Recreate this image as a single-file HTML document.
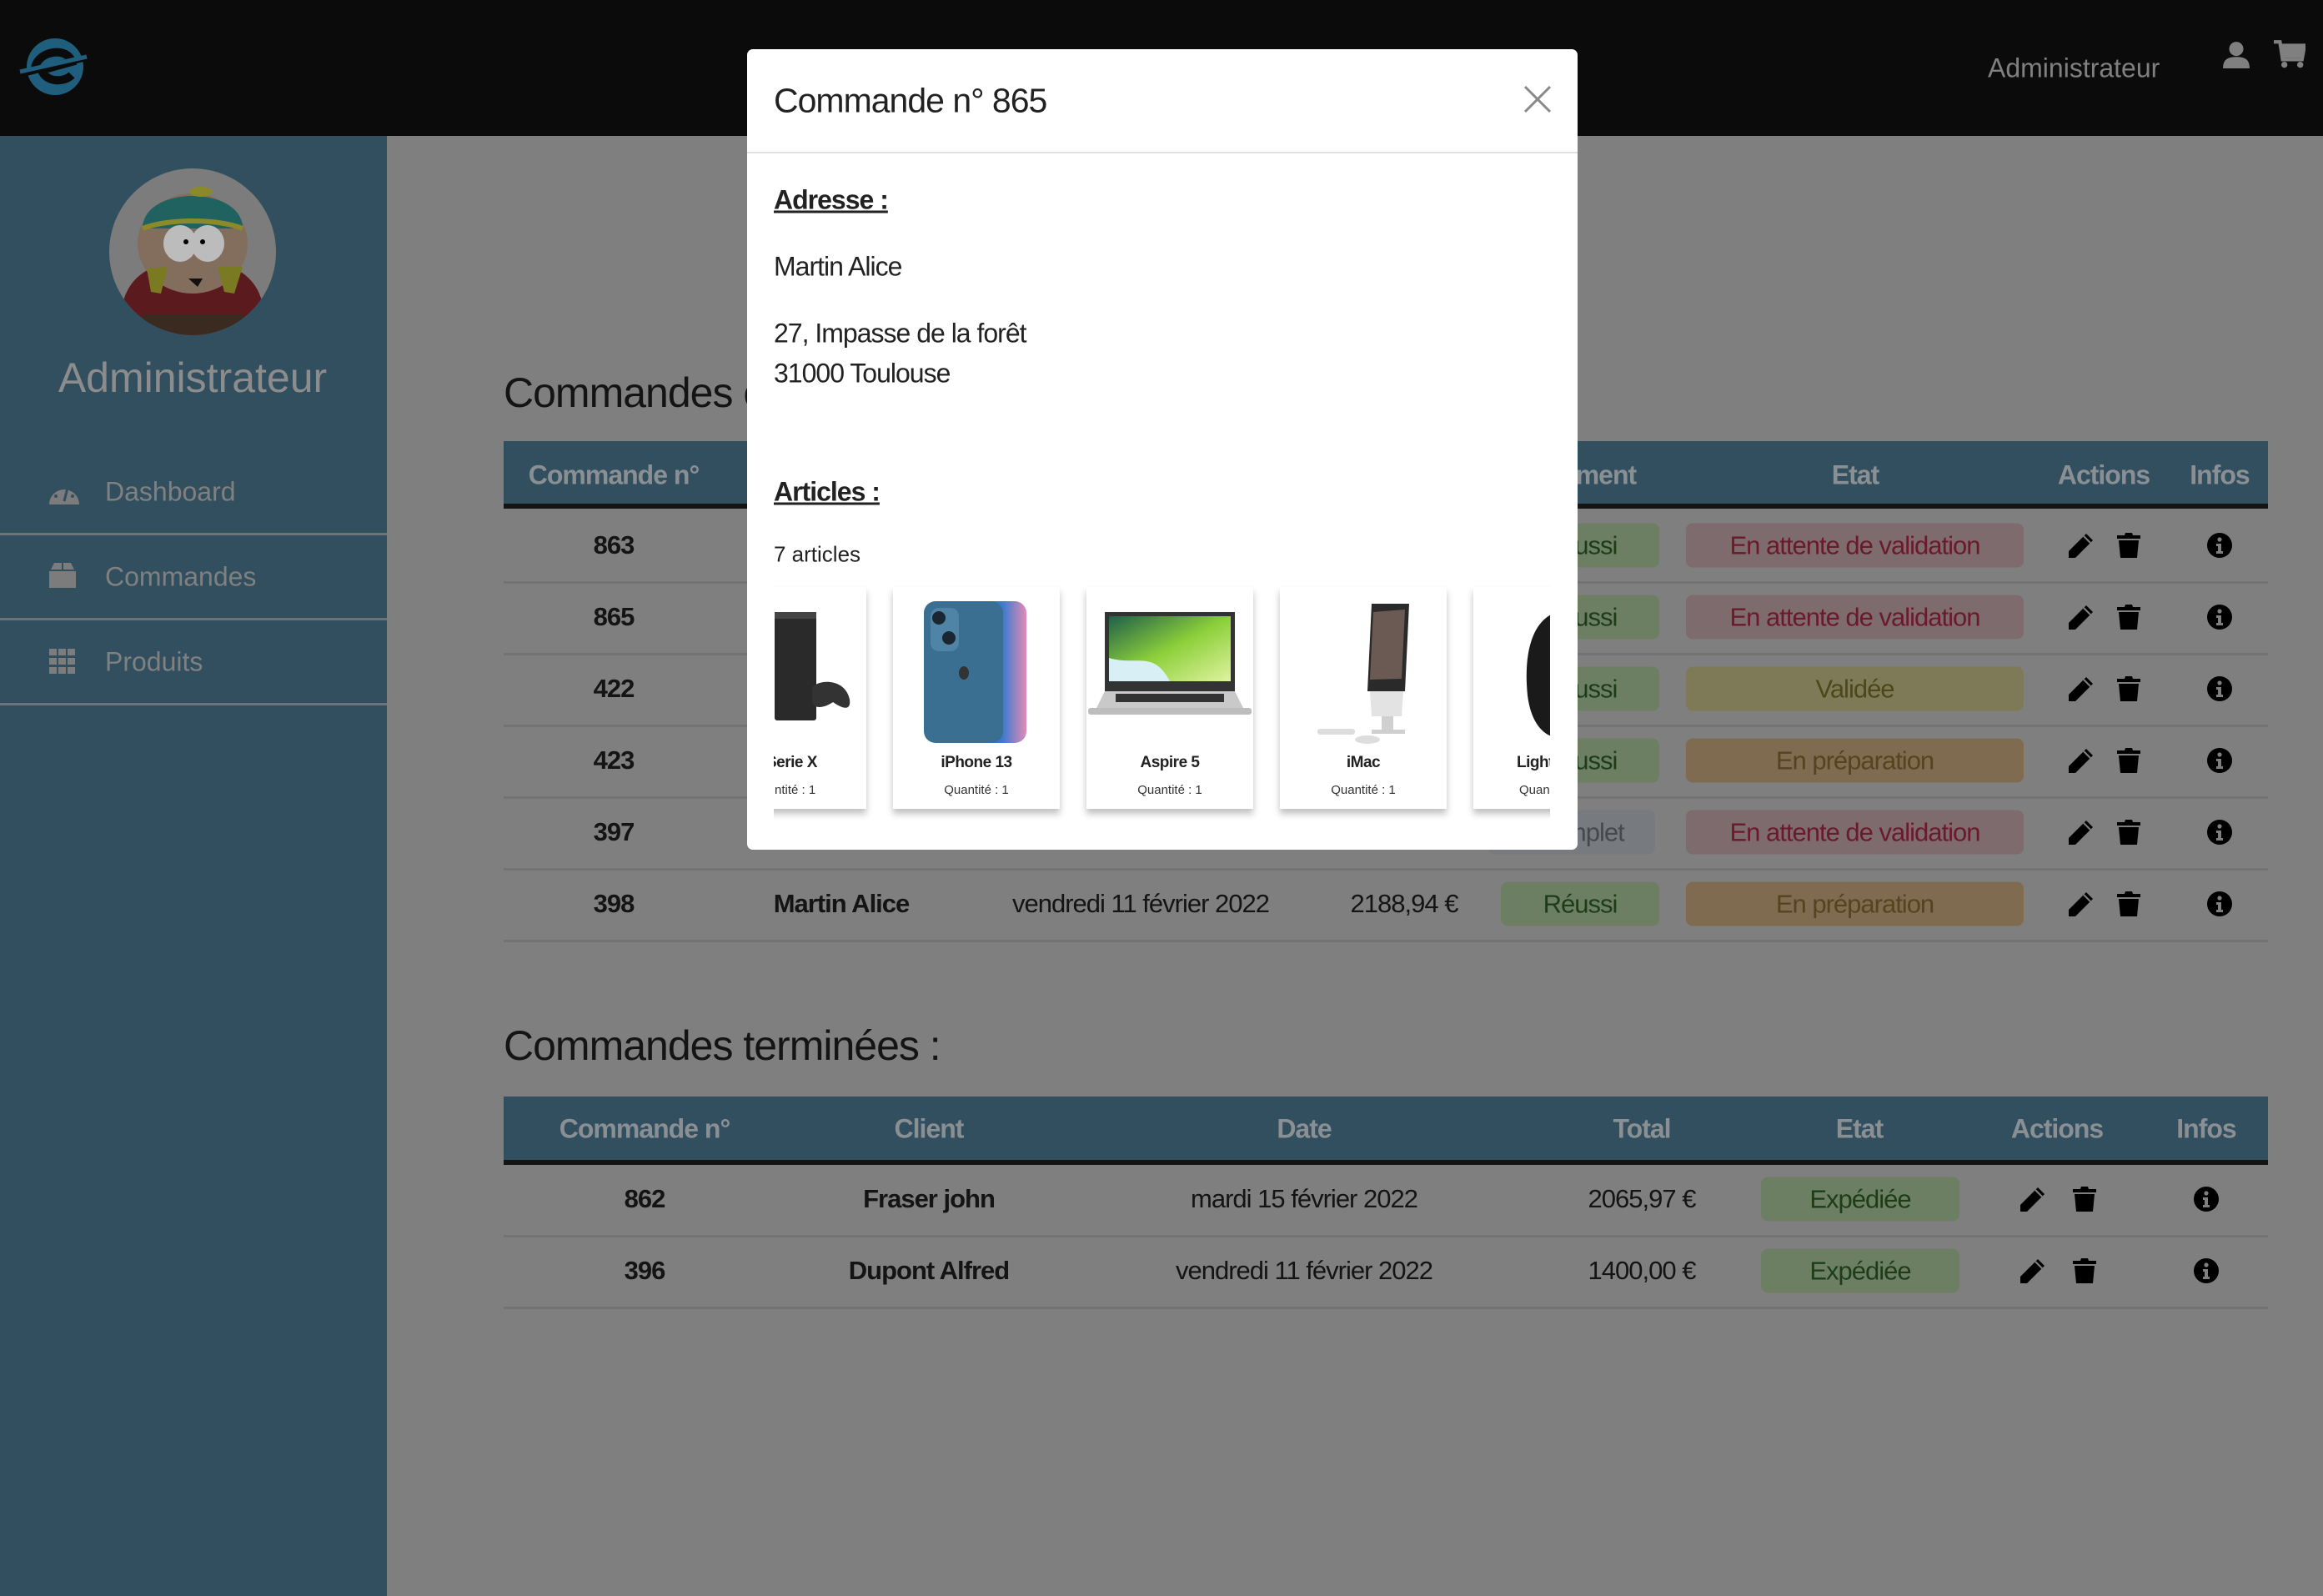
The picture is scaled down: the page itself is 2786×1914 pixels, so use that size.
<!DOCTYPE html>
<html><head><meta charset="utf-8">
<style>
*{margin:0;padding:0;box-sizing:border-box}
html,body{width:2786px;height:1914px;overflow:hidden}
body{background:#7f7f7f;font-family:"Liberation Sans",sans-serif;position:relative;color:#141414}
.a{position:absolute}
.c{position:absolute;white-space:nowrap;transform:translate(-50%,-50%);letter-spacing:-1px}
.l{position:absolute;white-space:nowrap;transform:translateY(-50%);letter-spacing:-1px}
.hd{font-weight:bold;font-size:32px;color:#8a8f93}
.cell{font-size:31px}
.b{font-weight:bold}
.badge{position:absolute;height:53px;border-radius:8px;transform:translateY(-50%);font-size:31px;display:flex;align-items:center;justify-content:center;letter-spacing:-1px;white-space:nowrap}
.g{background:#6d7f63;color:#1c3d17}
.r{background:#7d6b6e;color:#6a1a2a}
.y{background:#7e7a57;color:#4d4719}
.o{background:#7f6b50;color:#574320}
.gr{background:#777a7e;color:#45494e}
.line{position:absolute;height:3px;background:#737373}
.card{position:absolute;top:5px;width:200px;height:266px;background:#fff;box-shadow:0 6px 8px rgba(0,0,0,.25)}
.cn{position:absolute;left:0;right:0;top:200px;text-align:center;font-weight:bold;font-size:19px;letter-spacing:-.5px;color:#222}
.cq{position:absolute;left:0;right:0;top:235px;text-align:center;font-size:15px;color:#333}
</style></head><body>

<div class="a" style="left:0;top:0;width:2786px;height:163px;background:#0b0b0b"></div>
<svg class="a" style="left:20px;top:40px" width="90" height="80" viewBox="0 0 90 80">
<circle cx="46" cy="40" r="34" fill="#1f5f7d"/>
<path d="M22 46 C20 22 60 14 66 34 L30 44 C34 58 56 60 66 50" fill="none" stroke="#0b0b0b" stroke-width="10"/>
<path d="M6 50 L86 30" stroke="#0b0b0b" stroke-width="5"/>
<path d="M4 46 L84 28" stroke="#1f5f7d" stroke-width="5"/>
</svg>
<div class="l" style="left:2384px;top:82px;font-size:32px;color:#808080;letter-spacing:0">Administrateur</div>
<svg class="a" style="left:2665px;top:48px" width="34" height="34" viewBox="0 0 32 32"><circle cx="16" cy="10" r="8" fill="#808080"/><path d="M1 32 C1 22 6 19 16 19 C26 19 31 22 31 32Z" fill="#808080"/></svg>
<svg class="a" style="left:2727px;top:48px" width="38" height="34" viewBox="0 0 36 32"><path d="M0 2 H7 L10 22 H32 L35 6 H9" fill="none" stroke="#808080" stroke-width="4"/><path d="M9 6 H35 L32 20 H11Z" fill="#808080"/><circle cx="12" cy="28" r="3.5" fill="#808080"/><circle cx="30" cy="28" r="3.5" fill="#808080"/></svg>

<div class="a" style="left:0;top:163px;width:464px;height:1751px;background:#324f5f"></div>
<svg class="a" style="left:131px;top:202px" width="200" height="200" viewBox="0 0 200 200">
<defs><clipPath id="cp"><circle cx="100" cy="100" r="100"/></clipPath></defs>
<circle cx="100" cy="100" r="100" fill="#7c7c7c"/>
<g clip-path="url(#cp)">
<path d="M15 190 C10 140 40 110 100 110 C160 110 190 140 185 190Z" fill="#5a1a1e"/>
<rect x="40" y="175" width="120" height="25" fill="#3a2a20"/>
<ellipse cx="100" cy="90" rx="66" ry="60" fill="#836e5e"/>
<path d="M40 72 C40 20 160 20 160 72Z" fill="#1f6260"/>
<path d="M40 72 C70 60 130 60 160 72" stroke="#8a8a2a" stroke-width="6" fill="none"/>
<ellipse cx="110" cy="28" rx="14" ry="6" fill="#8a8a2a"/>
<ellipse cx="85" cy="90" rx="20" ry="22" fill="#bcbcbc"/><ellipse cx="118" cy="90" rx="20" ry="22" fill="#bcbcbc"/>
<circle cx="92" cy="88" r="3" fill="#000"/><circle cx="112" cy="88" r="3" fill="#000"/>
<path d="M95 132 H112 L106 142Z" fill="#111"/>
<path d="M45 120 L70 118 L62 150 L50 148Z" fill="#7a7a22"/><path d="M130 118 L160 118 L150 150 L138 148Z" fill="#7a7a22"/>
</g></svg>
<div class="c" style="left:231px;top:453px;font-size:50px;color:#8c8c8c;letter-spacing:0">Administrateur</div>
<svg class="a" style="left:59px;top:575px" width="36" height="30" viewBox="0 0 36 30"><path d="M0 30 A18 18 0 1 1 36 30Z" fill="#7c7c7c"/><path d="M18 26 L22 10" stroke="#324f5f" stroke-width="3"/><circle cx="8" cy="20" r="2" fill="#324f5f"/><circle cx="11" cy="11" r="2" fill="#324f5f"/><circle cx="28" cy="20" r="2" fill="#324f5f"/></svg>
<div class="l" style="left:126px;top:590px;font-size:32px;color:#808080;letter-spacing:0">Dashboard</div>
<div class="a" style="left:0;top:639px;width:464px;height:3px;background:#6c7478"></div>
<svg class="a" style="left:59px;top:673px" width="32" height="32" viewBox="0 0 32 32"><path d="M2 10 L6 2 H26 L30 10Z" fill="#7c7c7c"/><rect x="0" y="12" width="32" height="20" fill="#7c7c7c"/><rect x="15" y="2" width="2" height="10" fill="#324f5f"/></svg>
<div class="l" style="left:126px;top:692px;font-size:32px;color:#808080;letter-spacing:0">Commandes</div>
<div class="a" style="left:0;top:741px;width:464px;height:3px;background:#6c7478"></div>
<svg class="a" style="left:59px;top:778px" width="32" height="30" viewBox="0 0 32 30"><g fill="#7c7c7c"><rect x="0" y="0" width="9" height="8"/><rect x="11" y="0" width="9" height="8"/><rect x="22" y="0" width="9" height="8"/><rect x="0" y="11" width="9" height="8"/><rect x="11" y="11" width="9" height="8"/><rect x="22" y="11" width="9" height="8"/><rect x="0" y="22" width="9" height="8"/><rect x="11" y="22" width="9" height="8"/><rect x="22" y="22" width="9" height="8"/></g></svg>
<div class="l" style="left:126px;top:794px;font-size:32px;color:#808080;letter-spacing:0">Produits</div>
<div class="a" style="left:0;top:843px;width:464px;height:3px;background:#6c7478"></div>

<div class="l" style="left:604px;top:471px;font-size:50px;color:#141414;letter-spacing:-1px">Commandes en cours :</div>
<div class="a" style="left:604px;top:529px;width:2116px;height:81px;background:#324f5f;border-bottom:6px solid #141414"></div>
<div class="c hd" style="left:736px;top:570px">Commande n°</div>
<div class="c hd" style="left:1009px;top:570px">Client</div>
<div class="c hd" style="left:1368px;top:570px">Date</div>
<div class="c hd" style="left:1684px;top:570px">Total</div>
<div class="c hd" style="left:1895px;top:570px">Paiement</div>
<div class="c hd" style="left:2225px;top:570px">Etat</div>
<div class="c hd" style="left:2523px;top:570px">Actions</div>
<div class="c hd" style="left:2662px;top:570px">Infos</div>

<svg width="0" height="0" style="position:absolute"><defs>
<symbol id="pen" viewBox="0 0 32 32"><path d="M22 2 L30 10 L9 31 L1 31 L1 23Z" fill="#000"/><path d="M19 5 L27 13" stroke="#7f7f7f" stroke-width="2"/></symbol>
<symbol id="trash" viewBox="0 0 28 32"><path d="M0 4 H9 L10 1 H18 L19 4 H28 V8 H0Z" fill="#000"/><path d="M2 10 H26 L24 31 H4Z" fill="#000"/></symbol>
<symbol id="info" viewBox="0 0 32 32"><circle cx="16" cy="16" r="15" fill="#000"/><circle cx="16" cy="9" r="2.6" fill="#7f7f7f"/><path d="M12 14 H18 V23 H20 V26 H12 V23 H14 V17 H12Z" fill="#7f7f7f"/></symbol>
</defs></svg>

<div class="c cell b" style="left:736px;top:654px">863</div>
<div class="c cell b" style="left:736px;top:740px">865</div>
<div class="c cell b" style="left:736px;top:826px">422</div>
<div class="c cell b" style="left:736px;top:912px">423</div>
<div class="c cell b" style="left:736px;top:998px">397</div>
<div class="c cell b" style="left:736px;top:1084px">398</div>
<div class="c cell b" style="left:1009px;top:654px">Martin Alice</div>
<div class="c cell b" style="left:1009px;top:740px">Martin Alice</div>
<div class="c cell b" style="left:1009px;top:826px">Dupont Alfred</div>
<div class="c cell b" style="left:1009px;top:912px">Dupont Alfred</div>
<div class="c cell b" style="left:1009px;top:998px">Martin Alice</div>
<div class="c cell b" style="left:1009px;top:1084px">Martin Alice</div>
<div class="c cell" style="left:1368px;top:1084px">vendredi 11 février 2022</div>
<div class="c cell" style="left:1684px;top:1084px">2188,94 €</div>

<div class="badge g" style="left:1800px;top:654px;width:190px">Réussi</div>
<div class="badge g" style="left:1800px;top:740px;width:190px">Réussi</div>
<div class="badge g" style="left:1800px;top:826px;width:190px">Réussi</div>
<div class="badge g" style="left:1800px;top:912px;width:190px">Réussi</div>
<div class="badge gr" style="left:1785px;top:998px;width:200px">Incomplet</div>
<div class="badge g" style="left:1800px;top:1084px;width:190px">Réussi</div>

<div class="badge r" style="left:2022px;top:654px;width:405px">En attente de validation</div>
<div class="badge r" style="left:2022px;top:740px;width:405px">En attente de validation</div>
<div class="badge y" style="left:2022px;top:826px;width:405px">Validée</div>
<div class="badge o" style="left:2022px;top:912px;width:405px">En préparation</div>
<div class="badge r" style="left:2022px;top:998px;width:405px">En attente de validation</div>
<div class="badge o" style="left:2022px;top:1084px;width:405px">En préparation</div>

<div class="line" style="left:604px;top:697px;width:2116px"></div>
<div class="line" style="left:604px;top:783px;width:2116px"></div>
<div class="line" style="left:604px;top:869px;width:2116px"></div>
<div class="line" style="left:604px;top:955px;width:2116px"></div>
<div class="line" style="left:604px;top:1041px;width:2116px"></div>
<div class="line" style="left:604px;top:1127px;width:2116px"></div>

<svg class="a" style="left:2480px;top:638px" width="32" height="32"><use href="#pen"/></svg><svg class="a" style="left:2539px;top:638px" width="28" height="32"><use href="#trash"/></svg><svg class="a" style="left:2646px;top:638px" width="32" height="32"><use href="#info"/></svg>
<svg class="a" style="left:2480px;top:724px" width="32" height="32"><use href="#pen"/></svg><svg class="a" style="left:2539px;top:724px" width="28" height="32"><use href="#trash"/></svg><svg class="a" style="left:2646px;top:724px" width="32" height="32"><use href="#info"/></svg>
<svg class="a" style="left:2480px;top:810px" width="32" height="32"><use href="#pen"/></svg><svg class="a" style="left:2539px;top:810px" width="28" height="32"><use href="#trash"/></svg><svg class="a" style="left:2646px;top:810px" width="32" height="32"><use href="#info"/></svg>
<svg class="a" style="left:2480px;top:896px" width="32" height="32"><use href="#pen"/></svg><svg class="a" style="left:2539px;top:896px" width="28" height="32"><use href="#trash"/></svg><svg class="a" style="left:2646px;top:896px" width="32" height="32"><use href="#info"/></svg>
<svg class="a" style="left:2480px;top:982px" width="32" height="32"><use href="#pen"/></svg><svg class="a" style="left:2539px;top:982px" width="28" height="32"><use href="#trash"/></svg><svg class="a" style="left:2646px;top:982px" width="32" height="32"><use href="#info"/></svg>
<svg class="a" style="left:2480px;top:1068px" width="32" height="32"><use href="#pen"/></svg><svg class="a" style="left:2539px;top:1068px" width="28" height="32"><use href="#trash"/></svg><svg class="a" style="left:2646px;top:1068px" width="32" height="32"><use href="#info"/></svg>

<div class="l" style="left:604px;top:1254px;font-size:50px;color:#141414">Commandes terminées :</div>
<div class="a" style="left:604px;top:1315px;width:2116px;height:82px;background:#324f5f;border-bottom:6px solid #141414"></div>
<div class="c hd" style="left:773px;top:1354px">Commande n°</div>
<div class="c hd" style="left:1114px;top:1354px">Client</div>
<div class="c hd" style="left:1564px;top:1354px">Date</div>
<div class="c hd" style="left:1969px;top:1354px">Total</div>
<div class="c hd" style="left:2230px;top:1354px">Etat</div>
<div class="c hd" style="left:2467px;top:1354px">Actions</div>
<div class="c hd" style="left:2646px;top:1354px">Infos</div>

<div class="c cell b" style="left:773px;top:1438px">862</div>
<div class="c cell b" style="left:773px;top:1524px">396</div>
<div class="c cell b" style="left:1114px;top:1438px">Fraser john</div>
<div class="c cell b" style="left:1114px;top:1524px">Dupont Alfred</div>
<div class="c cell" style="left:1564px;top:1438px">mardi 15 février 2022</div>
<div class="c cell" style="left:1564px;top:1524px">vendredi 11 février 2022</div>
<div class="c cell" style="left:1969px;top:1438px">2065,97 €</div>
<div class="c cell" style="left:1969px;top:1524px">1400,00 €</div>
<div class="badge g" style="left:2112px;top:1438px;width:238px">Expédiée</div>
<div class="badge g" style="left:2112px;top:1524px;width:238px">Expédiée</div>
<svg class="a" style="left:2422px;top:1422px" width="32" height="32"><use href="#pen"/></svg><svg class="a" style="left:2486px;top:1422px" width="28" height="32"><use href="#trash"/></svg><svg class="a" style="left:2630px;top:1422px" width="32" height="32"><use href="#info"/></svg>
<svg class="a" style="left:2422px;top:1508px" width="32" height="32"><use href="#pen"/></svg><svg class="a" style="left:2486px;top:1508px" width="28" height="32"><use href="#trash"/></svg><svg class="a" style="left:2630px;top:1508px" width="32" height="32"><use href="#info"/></svg>
<div class="line" style="left:604px;top:1481px;width:2116px"></div>
<div class="line" style="left:604px;top:1567px;width:2116px"></div>

<div class="a" style="left:896px;top:59px;width:996px;height:960px;background:#fff;border-radius:7px;overflow:hidden">
  <div class="l" style="left:32px;top:62px;font-size:41px;color:#222">Commande n° 865</div>
  <svg class="a" style="left:930px;top:42px" width="36" height="36" viewBox="0 0 36 36"><path d="M3 3 L33 33 M33 3 L3 33" stroke="#8a8a8a" stroke-width="3"/></svg>
  <div class="a" style="left:0;top:123px;width:996px;height:2px;background:#dee2e6"></div>
  <div class="l" style="left:32px;top:181px;font-size:32px;font-weight:bold;text-decoration:underline;color:#222">Adresse :</div>
  <div class="l" style="left:32px;top:261px;font-size:32px;color:#222">Martin Alice</div>
  <div class="l" style="left:32px;top:341px;font-size:32px;color:#222">27, Impasse de la forêt</div>
  <div class="l" style="left:32px;top:389px;font-size:32px;color:#222">31000 Toulouse</div>
  <div class="l" style="left:32px;top:531px;font-size:32px;font-weight:bold;text-decoration:underline;color:#222">Articles :</div>
  <div class="l" style="left:32px;top:606px;font-size:26px;color:#222;letter-spacing:0">7 articles</div>
  <div class="a" style="left:32px;top:640px;width:931px;height:300px;overflow:hidden">
      <div class="card" style="left:-89px"><svg class="a" style="left:85px;top:30px" width="100" height="150" viewBox="0 0 100 150"><rect x="5" y="0" width="50" height="130" rx="3" fill="#2a2a2a"/><rect x="5" y="0" width="50" height="8" fill="#444"/><path d="M50 90 C60 80 90 80 95 105 C97 120 85 115 75 108 C65 115 50 118 50 105Z" fill="#333"/></svg><div class="cn" style="left:80px;text-align:left">Serie X</div><div class="cq" style="left:90px;text-align:left">ntité : 1</div></div>
      <div class="card" style="left:143px"><svg class="a" style="left:35px;top:15px" width="130" height="175" viewBox="0 0 130 175"><defs><linearGradient id="ip" x1="0" x2="1"><stop offset="0" stop-color="#2b5ea7"/><stop offset=".6" stop-color="#3d7bd0"/><stop offset="1" stop-color="#e38bb5"/></linearGradient></defs><rect x="55" y="2" width="70" height="170" rx="14" fill="url(#ip)"/><rect x="2" y="2" width="95" height="170" rx="14" fill="#3b6f91"/><rect x="10" y="10" width="34" height="52" rx="10" fill="#4f84a6"/><circle cx="20" cy="22" r="8" fill="#1a2630"/><circle cx="32" cy="46" r="8" fill="#1a2630"/><ellipse cx="50" cy="88" rx="6" ry="8" fill="#333"/></svg><div class="cn">iPhone 13</div><div class="cq">Quantité : 1</div></div>
      <div class="card" style="left:375px"><svg class="a" style="left:0;top:25px" width="200" height="140" viewBox="0 0 200 140"><defs><linearGradient id="ac" x1="0" x2="1" y1="0" y2="1"><stop offset="0" stop-color="#1f5f4a"/><stop offset=".5" stop-color="#8ccf3a"/><stop offset="1" stop-color="#dff3a0"/></linearGradient></defs><rect x="22" y="5" width="156" height="95" fill="#333"/><rect x="27" y="10" width="146" height="78" fill="url(#ac)"/><path d="M27 60 C60 70 80 50 100 88 H27Z" fill="#d8f0f5"/><path d="M22 100 H178 L188 120 H12Z" fill="#c9c9c9"/><rect x="35" y="103" width="130" height="10" fill="#333"/><rect x="2" y="120" width="196" height="8" rx="3" fill="#bdbdbd"/></svg><div class="cn">Aspire 5</div><div class="cq">Quantité : 1</div></div>
      <div class="card" style="left:607px"><svg class="a" style="left:30px;top:15px" width="140" height="175" viewBox="0 0 140 175"><path d="M80 5 L125 5 L120 110 L75 110Z" fill="#2a2a2a"/><path d="M82 15 L120 12 L116 95 L78 96Z" fill="#6b5a54"/><path d="M78 110 L118 110 L116 140 L80 140Z" fill="#e3e3e3"/><rect x="92" y="140" width="14" height="18" fill="#d0d0d0"/><rect x="80" y="156" width="40" height="5" fill="#cfcfcf"/><rect x="15" y="155" width="45" height="7" rx="3" fill="#ddd"/><ellipse cx="75" cy="168" rx="15" ry="5" fill="#ddd"/></svg><div class="cn">iMac</div><div class="cq">Quantité : 1</div></div>
      <div class="card" style="left:839px"><svg class="a" style="left:60px;top:30px" width="40" height="150" viewBox="0 0 40 150"><path d="M40 0 C10 10 0 50 5 100 C10 140 30 150 40 150Z" fill="#1a1a1a"/></svg><div class="cn" style="text-align:left;left:52px">Lightspeed</div><div class="cq" style="text-align:left;left:55px">Quantité : 1</div></div>
  </div>
</div>
</body></html>
